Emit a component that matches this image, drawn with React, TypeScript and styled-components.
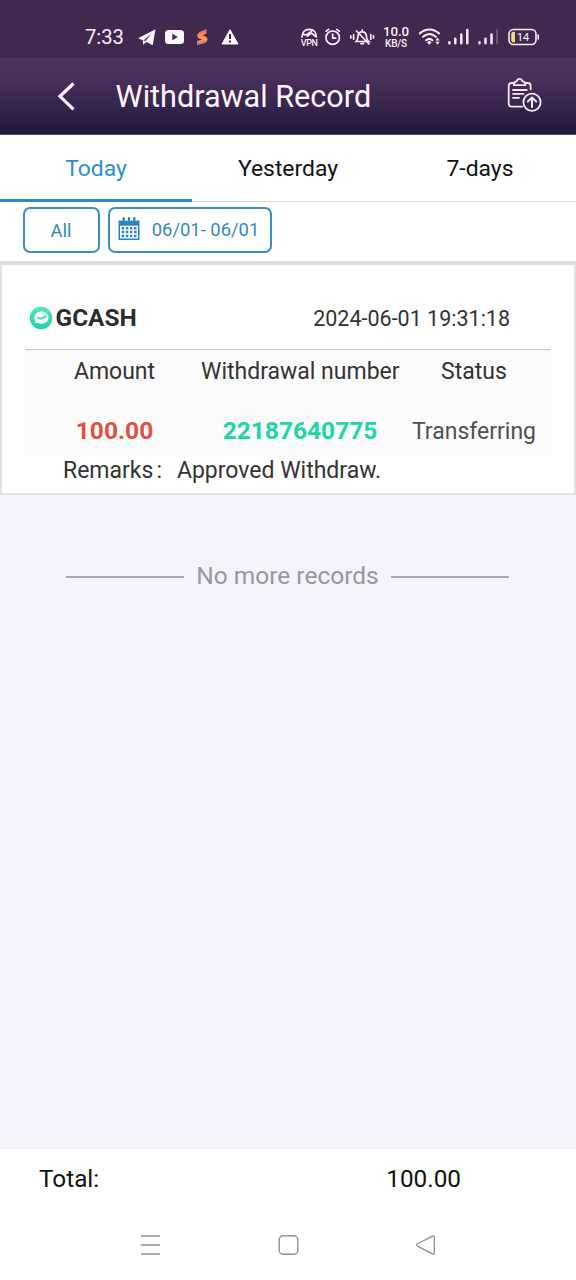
import React from 'react';
import styled, { createGlobalStyle } from 'styled-components';

const GlobalStyle = createGlobalStyle`
  * { box-sizing: border-box; }
  body { margin: 0; background: #f5f4fc; font-family: Roboto, sans-serif; }
`;

const Screen = styled.div`
  display: flex;
  flex-direction: column;
  width: 576px;
  height: 1280px;
  overflow: hidden;
  background: #f5f4fc;
  white-space: nowrap;
`;

const StatusBar = styled.div`
  display: flex;
  height: 58px;
  padding: 15px 0 0 85px;
  background: #41284e;
  color: #fbeefa;
`;

const Clock = styled.div`
  width: 45px;
  font-size: 20.2px;
  line-height: 44px;
`;

const StatusIcons = styled.svg`
  display: block;
  height: 44px;
`;

const Speed = styled.div`
  display: flex;
  flex-direction: column;
  align-items: center;
  width: 30px;
  padding-top: 9px;
  font-weight: 500;
  font-size: 13.4px;
  line-height: 16px;
  letter-spacing: -0.2px;
`;

const SpeedUnit = styled.span`
  margin-top: -1px;
  font-size: 10px;
  font-weight: 500;
  line-height: 9px;
`;

const Header = styled.header`
  display: flex;
  align-items: center;
  height: 77px;
  padding: 0 33px 0 56px;
  background: linear-gradient(#50335f 0%, #49305b 25%, #3a2750 55%, #2b1e44 85%, #211839 100%);
  border-bottom: 1px solid #55496a;
  color: #fff4ff;
`;

const Title = styled.h1`
  flex: 1;
  margin: 1px 0 0 38.5px;
  font-size: 30.6px;
  font-weight: 400;
  line-height: 40px;
`;

const Tabs = styled.nav`
  display: flex;
  height: 67px;
  background: #fff;
`;

const Tab = styled.div<{ $active?: boolean }>`
  flex: 1;
  text-align: center;
  font-size: 22.9px;
  line-height: 67px;
  color: ${(p) => (p.$active ? '#2d8fc9' : '#111')};
  box-shadow: inset 0 ${(p) => (p.$active ? '-3px #2d8ac6' : '-1px #dcdcdc')};
`;

const Filters = styled.div`
  display: flex;
  gap: 8px;
  height: 59px;
  padding: 5px 0 0 23px;
  background: #fff;
`;

const FilterButton = styled.div<{ $width: number; $lift?: number }>`
  display: flex;
  align-items: center;
  justify-content: center;
  gap: 12px;
  width: ${(p) => p.$width}px;
  height: 46px;
  padding: 0 ${(p) => (p.$lift || 0) + 1}px ${(p) => p.$lift || 0}px 0;
  border: 2px solid #3a8fc0;
  border-radius: 7px;
  color: #3589bb;
  font-size: 18.4px;
`;

const Card = styled.section`
  height: 234px;
  padding: 28px 23px 0;
  background: #fff;
  border: 2px solid #e2e2e5;
  border-top: 4px solid #dcdcdc;
  color: #333;
`;

const CardHead = styled.div`
  display: flex;
  align-items: center;
  height: 57px;
  padding: 0 41px 6px 4px;
  border-bottom: 1px solid #c6c6c6;
`;

const Provider = styled.span`
  flex: 1;
  margin-left: 2.5px;
  font-size: 24.4px;
  font-weight: 700;
  line-height: 28px;
  padding-bottom: 1px;
  color: #2d2d2f;
`;

const Timestamp = styled.span`
  font-size: 21.5px;
`;

const Details = styled.div`
  display: grid;
  grid-template-columns: 179px 192px 155px;
  grid-template-rows: 43px 64px;
  height: 107px;
  background: #fbfbfb;
  text-align: center;
`;

const Label = styled.div<{ $shift?: number }>`
  margin-left: ${(p) => p.$shift || 0}px;
  font-size: 23px;
  line-height: 44px;
`;

const Value = styled.div<{ $color: string; $bold?: boolean }>`
  padding-left: ${(p) => (p.$bold ? 0 : 1)}px;
  font-size: ${(p) => (p.$bold ? 24.5 : 23)}px;
  font-weight: ${(p) => (p.$bold ? 700 : 400)};
  line-height: ${(p) => (p.$bold ? 76 : 77)}px;
  color: ${(p) => p.$color};
`;

const Remarks = styled.div`
  display: flex;
  gap: 15px;
  padding-left: 38px;
  font-size: 23px;
  line-height: 27px;
`;

const Colon = styled.span`
  margin-left: 3px;
`;

const EndNote = styled.div`
  display: flex;
  align-items: center;
  gap: 12px;
  padding: 66px 67px 0 66px;
  font-size: 24.5px;
  line-height: 30px;
  color: #98979b;
`;

const Rule = styled.span`
  flex: 1;
  height: 2px;
  margin-top: 1px;
  background: #aaa9ad;
`;

const Footer = styled.footer`
  display: flex;
  justify-content: space-between;
  height: 61px;
  margin-top: auto;
  padding: 0 115px 0 39px;
  background: #fff;
  font-size: 24.3px;
  line-height: 60px;
  color: #111;
`;

const NavBar = styled.div`
  display: flex;
  justify-content: space-between;
  height: 70px;
  padding: 24px 140px 0;
  background: #fff;
`;

const NotificationIcons = () => (
  <StatusIcons width="171" viewBox="130 15 171 44">
    <path d="M138 38.2 155.5 29.2l-2.8 16-6.2-3.2-3.3 2.8-.4-4.6Z" fill="#fff8ff" />
    <path d="m143.2 40.4 8.3-6.7-5.8 7.6Z" fill="#6d5677" />
    <rect x="165" y="30" width="19" height="14" rx="3.5" fill="#fff8ff" />
    <path d="m172.3 33.8 5.6 3.2-5.6 3.2Z" fill="#41284e" />
    <defs>
      <linearGradient id="spark" x1="0" y1="0" x2="0" y2="1">
        <stop offset="0" stopColor="#ac66b5" />
        <stop offset=".3" stopColor="#ff8044" />
        <stop offset=".65" stopColor="#f9a044" />
        <stop offset="1" stopColor="#a768d4" />
      </linearGradient>
    </defs>
    <path d="m206.5 28.8-7.2 3.4c-3.2 2.3-2.4 5.8.8 6.6l2.2.6-5.3 1.6v4.3l7.3-2c4.4-2.1 4-6.5.2-7.4l-1.7-.5 3.7-2Z" fill="url(#spark)" />
    <path d="m230 29.7 8 14.3h-16Z" fill="#fff8ff" stroke="#fff8ff" strokeWidth="1" strokeLinejoin="round" />
    <path d="M230 34v5M230 40.5v2" stroke="#41284e" strokeWidth="2" />
  </StatusIcons>
);

const SystemIcons = () => (
  <StatusIcons width="80" viewBox="301 15 80 44" fill="none" stroke="#fbeefa" strokeWidth="1.7" strokeLinecap="round">
    <path d="M302 37c0-4.7 3-7.7 7.2-7.7s7.2 3 7.2 7.7M303.5 34.2c1.8 1 4 .4 5.5-1.1l2.3-1.8M307.5 36.2l3.8-3.2 4.2 3.2" />
    <text x="300.8" y="45.5" fontSize="9" fontWeight="500" textLength="17" fill="#fbeefa" stroke="none" fontFamily="Roboto">VPN</text>
    <circle cx="332.7" cy="37.7" r="6.7" />
    <path d="M332.7 34v4.2h3M326.1 31.2l2.5-1.8M339.3 31.2l-2.5-1.8" />
    <path d="M356.2 41.5h12.4c-2.2-1.7-1.9-3-2.1-5.3-.3-3-1.8-4.4-4.3-4.4s-4 1.4-4.3 4.4c-.2 2.3.1 3.6-1.7 5.3ZM362.2 31.5v-1.4M361 43.7h2.5M356.5 31l12.5 13M353.6 34.7v4.5M350.8 35.8v2.1M370.8 34.7v4.5M373.5 35.8v2.1" />
  </StatusIcons>
);

const ConnectionIcons = () => (
  <StatusIcons width="131" viewBox="411 15 131 44" fill="none" stroke="#fbeefa" strokeLinecap="round">
    <path d="M419.8 33.4c5.8-5.3 13.4-5.3 19.2 0M423 36.8c4-3.5 8.8-3.5 12.8 0M426.2 40.2c2-1.7 4.4-1.7 6.2 0" strokeWidth="2.1" />
    <path d="m427 42.3 2.3-1.5 2.3 1.5-2.3 2.5Z" fill="#fbeefa" stroke="none" />
    <path d="m435.4 40.5 2.1-2.9 2.1 2.9ZM435.4 41.8l2.1 2.9 2.1-2.9Z" fill="#fbeefa" stroke="none" />
    <path d="M449.4 42.3v1M455.3 38.8v4.5M461.3 34.5v8.8M467.3 30v13.3M479.5 42.3v1M485.5 38.8v4.5M491.5 34.5v8.8" strokeWidth="2.5" />
    <path d="M497 30v13.3" stroke="#6b5476" strokeWidth="2" />
    <rect x="509" y="29.5" width="27" height="15" rx="4.5" strokeWidth="1.6" />
    <path d="M538.2 35v4" strokeWidth="1.6" />
    <path d="M515 31.7v10.6h-1.2c-1.8 0-2.6-.8-2.6-2.6v-5.4c0-1.8.8-2.6 2.6-2.6Z" fill="#f4dc85" stroke="none" />
    <text x="516.8" y="41" fontSize="11.5" letterSpacing="-.4" fill="#fbeefa" stroke="none" fontFamily="Roboto">14</text>
  </StatusIcons>
);

const ClipboardIcon = () => (
  <svg width="38" height="38" viewBox="505 76.5 38 38" fill="none" stroke="#f4e8f4" strokeWidth="1.8" strokeLinecap="round" strokeLinejoin="round">
    <path d="M513.5 82.5h-2c-1.8 0-2.8 1-2.8 2.8v18c0 1.9 1 2.9 2.8 2.9H522M525.5 82.5h2.3c1.8 0 2.8 1 2.8 2.8v3.5" />
    <path d="M513.8 84.7c0-2.4 1-3.7 3-3.8.4-1.6 1.3-2.5 2.8-2.5s2.4.9 2.8 2.5c2 .1 3 1.4 3 3.8ZM513 89.5h13.7M513 93.4h10.5M513 97.4h6" />
    <circle cx="532" cy="101.8" r="8.6" />
    <path d="M532 106.5v-9M527.8 101l4.2-4 4.2 4" strokeWidth="2" />
  </svg>
);

const CalendarIcon = () => (
  <svg width="22" height="24" viewBox="0 0 22 24">
    <path d="M.5 3.5h21V23H.5Z" fill="#2e86bd" />
    <path d="M2 8.7h18v12.8H2Z" fill="#fff" />
    <path d="M5.7 0v4M11 0v4M16.3 0v4" stroke="#fff" strokeWidth="4" />
    <path d="M5.7 1.3v3.5M11 1.3v3.5M16.3 1.3v3.5" stroke="#2e86bd" strokeWidth="2.4" strokeLinecap="round" />
    <path d="M3.7 11.2h15M3.7 15.1h15M3.7 19h15" stroke="#2e86bd" strokeWidth="2.5" strokeDasharray="2.5 1.6" />
  </svg>
);

const ProviderLogo = () => (
  <svg width="24" height="24" viewBox="0 0 24 24">
    <defs>
      <linearGradient id="mint" x1="0" y1="0" x2="0" y2="1">
        <stop offset="0" stopColor="#50e9b5" />
        <stop offset="1" stopColor="#20ceb1" />
      </linearGradient>
    </defs>
    <circle cx="12" cy="12" r="11.3" fill="url(#mint)" />
    <path d="M12.5 5.4c4 0 7 2.5 7 6.2 0 3.6-3 6.1-7 6.1-1.6 0-3-.3-4.1-.9l-3.2.5 1.5-2.2c-1-1-1.4-2.1-1.4-3.5 0-3.7 3.1-6.2 7.2-6.2Z" fill="#f2fffb" />
    <path d="m8.7 11.6 2.7 1.2 6.1-2.6" fill="none" stroke="#45cdb0" strokeWidth="1.6" />
  </svg>
);

export default function App() {
  return (
    <Screen>
      <GlobalStyle />
      <StatusBar>
        <Clock>7:33</Clock>
        <NotificationIcons />
        <SystemIcons />
        <Speed>
          10.0
          <SpeedUnit>KB/S</SpeedUnit>
        </Speed>
        <ConnectionIcons />
      </StatusBar>
      <Header>
        <svg width="21" height="32" viewBox="0 0 21 32" fill="none" stroke="#fff4ff" strokeWidth="3.2">
          <path d="M17.5 3.5 4 16.3l13.5 13" />
        </svg>
        <Title>Withdrawal Record</Title>
        <ClipboardIcon />
      </Header>
      <Tabs>
        <Tab $active>Today</Tab>
        <Tab>Yesterday</Tab>
        <Tab>7-days</Tab>
      </Tabs>
      <Filters>
        <FilterButton $width={77}>All</FilterButton>
        <FilterButton $width={164} $lift={2}>
          <CalendarIcon />
          06/01- 06/01
        </FilterButton>
      </Filters>
      <Card>
        <CardHead>
          <ProviderLogo />
          <Provider>GCASH</Provider>
          <Timestamp>2024-06-01 19:31:18</Timestamp>
        </CardHead>
        <Details>
          <Label>Amount</Label>
          <Label $shift={-3}>Withdrawal number</Label>
          <Label $shift={1}>Status</Label>
          <Value $color="#dc5440" $bold>100.00</Value>
          <Value $color="#20d5a7" $bold>22187640775</Value>
          <Value $color="#505050">Transferring</Value>
        </Details>
        <Remarks>
          <span>Remarks<Colon>:</Colon></span>
          <span>Approved Withdraw.</span>
        </Remarks>
      </Card>
      <EndNote>
        <Rule />
        No more records
        <Rule />
      </EndNote>
      <Footer>
        <span>Total:</span>
        <span>100.00</span>
      </Footer>
      <NavBar>
        <svg width="21" height="22" viewBox="0 0 21 22" stroke="#919191" strokeWidth="1.5">
          <path d="M1 2h19M1 11h19M1 20h19" />
        </svg>
        <svg width="21" height="22" viewBox="0 0 21 22" fill="none" stroke="#919191" strokeWidth="1.4">
          <rect x="1.2" y="1.7" width="18.6" height="18.6" rx="4" />
        </svg>
        <svg width="21" height="22" viewBox="0 0 21 22" fill="none" stroke="#919191" strokeWidth="1.3">
          <path d="M17.7 2.1 2.5 9.7q-2.1 1.2 0 2.5l15.2 7.9q1.6.5 1.6-1.3V3.5q0-1.9-1.6-1.4Z" />
        </svg>
      </NavBar>
    </Screen>
  );
}
